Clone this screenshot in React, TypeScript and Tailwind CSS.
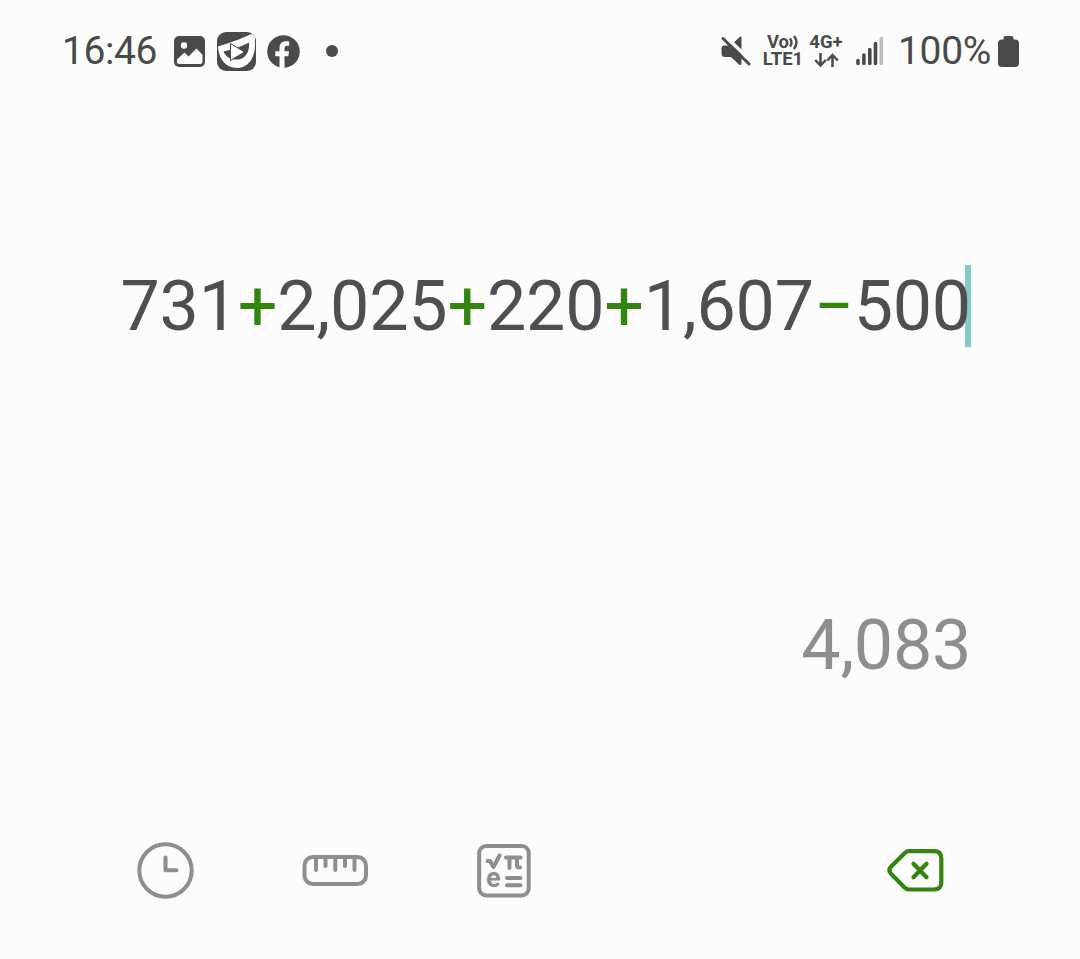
import type { ReactNode } from "react";

const expression = ["731", "+", "2,025", "+", "220", "+", "1,607", "−", "500"];

function GalleryIcon() {
  return (
    <svg className="h-[31px] w-[31px]" viewBox="0 0 31 31" aria-hidden>
      <rect width="31" height="31" rx="5" fill="#4a4a4a" />
      <circle cx="10" cy="9.5" r="3.2" fill="#fcfcfc" />
      <path d="M3 23.5 10.5 16.5l4 4L22.5 12.500l6 6.200v6.800q0 2.500-2.500 2.500H5.500q-2.500 0-2.500-2.500Z" fill="#fcfcfc" />
    </svg>
  );
}

function PlayerIcon() {
  return (
    <svg className="h-[39px] w-[39px]" viewBox="0 0 39 39" aria-hidden>
      <rect width="39" height="39" rx="9" fill="#4a4a4a" />
      <path
        d="M1 14.500C11 11.500 24 7 33 2.500Q36.500 1.500 38 5.500V13C38 26 31 36 20 36 9 36 1.500 27 1 14.500Z"
        fill="#fcfcfc"
      />
      <path d="M6.500 19.500C16 17.500 25 14.500 32 10.500 33 20 28 27.500 20 27.500 13 27.500 9 25 6.500 19.500Z" fill="#4a4a4a" />
      <path d="M13.500 11.500v17L27.500 20Z" fill="#fcfcfc" stroke="#4a4a4a" strokeWidth="1" />
    </svg>
  );
}

function FacebookIcon() {
  return (
    <svg className="h-[33px] w-[33px]" viewBox="0 0 33 33" aria-hidden>
      <circle cx="16.5" cy="16.5" r="16.3" fill="#4a4a4a" />
      <path
        d="M12.500 33.500V21.300H8.300v-5h4.200v-3.500c0-4.400 2.700-6.500 6.500-6.500 1.600 0 3.200.3 3.200.3v4.200h-2c-2 0-2.700 1.200-2.700 2.500v3h4.600l-.8 5h-3.800v12.200Z"
        fill="#fcfcfc"
      />
    </svg>
  );
}

function MutedIcon() {
  return (
    <svg className="h-[32px] w-[32px]" viewBox="0 0 32 32" aria-hidden>
      <path
        d="M21.500 2.500V28q0 3-2.500 1.500L11 22H5q-3.500 0-3.500-3.500v-5Q1.500 10.500 5 10.500h6l8-8q2.500-2 2.500 0Z"
        fill="#4a4a4a"
      />
      <path d="M4.500.500 32 27" stroke="#fcfcfc" strokeWidth="3.500" />
      <path d="M3 3.500 29 29" stroke="#4a4a4a" strokeWidth="3" strokeLinecap="round" />
    </svg>
  );
}

function VolteIcon() {
  return (
    <div className="flex w-[40px] flex-col items-center text-[18.500px] font-bold leading-[17px]">
      <span className="flex items-center">
        Vo
        <svg className="h-[15px] w-[10px]" viewBox="0 0 10 15" fill="none" stroke="#4a4a4a" strokeWidth="2.400" aria-hidden>
          <path d="M1 3.500q3 4 0 8M5 1q5 6.500 0 13" />
        </svg>
      </span>
      <span>LTE1</span>
    </div>
  );
}

function NetworkIcon() {
  return (
    <div className="flex w-[34px] flex-col items-center text-[18.500px] font-bold leading-[17px]">
      <span>4G+</span>
      <svg className="mt-[2px] h-[15px] w-[25px]" viewBox="0 0 25 15" fill="none" stroke="#4a4a4a" strokeWidth="2.500" aria-hidden>
        <path d="M6.500 0v12M1.200 7l5.300 5.500L11.800 7M18.500 14V2M13.200 7.500 18.500 2l5.300 5.500" />
      </svg>
    </div>
  );
}

function SignalIcon() {
  return (
    <svg className="h-[30px] w-[28px]" viewBox="0 0 28 30" strokeWidth="3.600" strokeLinecap="round" aria-hidden>
      <path d="M2 24.500v3M7.900 19v8.500M13.800 13.500v14M19.500 7.500v20" stroke="#4a4a4a" />
      <path d="M25.300 2.500v25" stroke="#bcbcbc" />
    </svg>
  );
}

function BatteryIcon() {
  return (
    <svg className="h-[31px] w-[21px]" viewBox="0 0 21 31" fill="#4a4a4a" aria-hidden>
      <rect x="5.500" width="10" height="8" rx="2" />
      <rect y="3.500" width="21" height="27.500" rx="4" />
    </svg>
  );
}

function StatusBar() {
  return (
    <header className="flex h-[102px] items-center pl-[61px] pr-[61px] text-[#4a4a4a]">
      <span className="w-[113px] pl-px text-[39px] leading-none tracking-[-0.4px]">16:46</span>
      <GalleryIcon />
      <span className="ml-[12px]">
        <PlayerIcon />
      </span>
      <span className="ml-[11px]">
        <FacebookIcon />
      </span>
      <span className="ml-[26px] size-[12px] rounded-full bg-[#4a4a4a]" />

      <div className="ml-auto flex items-center">
        <MutedIcon />
        <span className="ml-[11px]">
          <VolteIcon />
        </span>
        <span className="ml-[6px]">
          <NetworkIcon />
        </span>
        <span className="ml-[13px]">
          <SignalIcon />
        </span>
        <span className="ml-[14px] w-[100px] text-[39px] leading-none tracking-[-0.3px]">100%</span>
        <BatteryIcon />
      </div>
    </header>
  );
}

function ToolButton({ label, className, children }: { label: string; className: string; children: ReactNode }) {
  return (
    <button type="button" aria-label={label} className={className}>
      {children}
    </button>
  );
}

function Toolbar() {
  return (
    <div className="flex h-[62px] items-center pl-[136px] pr-[135px] text-[#8e8e90]">
      <ToolButton label="History" className="w-[58px]">
        <svg className="size-[58px]" viewBox="0 0 58 58" fill="none" stroke="currentColor" strokeWidth="4">
          <circle cx="29.500" cy="29.500" r="26.200" />
          <path d="M29.500 16.500v12.800h11" strokeLinecap="round" strokeLinejoin="round" />
        </svg>
      </ToolButton>
      <ToolButton label="Unit converter" className="ml-[107px]">
        <svg className="h-[34px] w-[68px]" viewBox="0 0 68 34" fill="none" stroke="currentColor" strokeWidth="4">
          <rect x="3.500" y="4" width="61.500" height="27" rx="8.500" />
          <path d="M15 4v13M24.500 4v9M34.300 4v13M44 4v9M53.500 4v13" strokeLinecap="round" />
        </svg>
      </ToolButton>
      <ToolButton label="Scientific mode" className="ml-[106px]">
        <svg className="size-[56px]" viewBox="0 0 56 56" fill="none" stroke="currentColor" strokeWidth="4">
          <rect x="4.200" y="4" width="49.500" height="49.500" rx="7" />
          <path
            d="M12.500 19H15l3.500 6 6-11.500M31 15.500h14.500M34.500 15.500v10.500M42 15.500v8q0 2 3 2M32 36h13.500M32 43.200h13.500"
            strokeLinecap="round"
            strokeLinejoin="round"
            strokeWidth="4"
          />
          <text x="11" y="44.500" fill="currentColor" stroke="none" fontSize="27" fontWeight="700">
            e
          </text>
        </svg>
      </ToolButton>
      <ToolButton label="Backspace" className="ml-auto text-[#348410]">
        <svg className="h-[46px] w-[60px]" viewBox="0 0 60 46" fill="none" stroke="currentColor" strokeWidth="4.200">
          <path
            d="M23 4.200h26q7.300 0 7.300 7.300v23.700q0 7.300-7.300 7.300H24q-2.500 0-4.500-2L6 26.700q-3.200-3.500 0-7L19.500 6.200q2-2 4.500-2Z"
            strokeLinejoin="round"
          />
          <path d="m28.500 16.700 13 13.500M41.500 16.700 28.500 30.200" strokeLinecap="round" />
        </svg>
      </ToolButton>
    </div>
  );
}

export default function App() {
  return (
    <main className="flex h-[959px] w-[1080px] flex-col overflow-hidden bg-[#fcfcfc] font-['Roboto',sans-serif]">
      <StatusBar />

      <div className="mt-[163px] flex h-[82px] items-center justify-end pr-[109px] text-[70px] leading-[82px] text-[#4f4f53]">
        <div className="relative z-10 flex whitespace-nowrap tracking-[-0.22px]">
          {expression.map((token, i) =>
            token === "+" || token === "−" ? (
              <span key={i} className="text-[#348410]">
                {token}
              </span>
            ) : (
              <span key={i}>{token}</span>
            )
          )}
        </div>
        {/* Caret sits behind the right edge of the last digit */}
        <span className="-ml-[6px] h-[82px] w-[6px] bg-[#84cbc4]" />
      </div>

      <div className="mt-[257px] pr-[109px] text-right text-[70px] leading-[82px] tracking-[-0.3px] text-[#8e8e92]">
        4,083
      </div>

      <div className="mt-[153px]">
        <Toolbar />
      </div>
    </main>
  );
}
